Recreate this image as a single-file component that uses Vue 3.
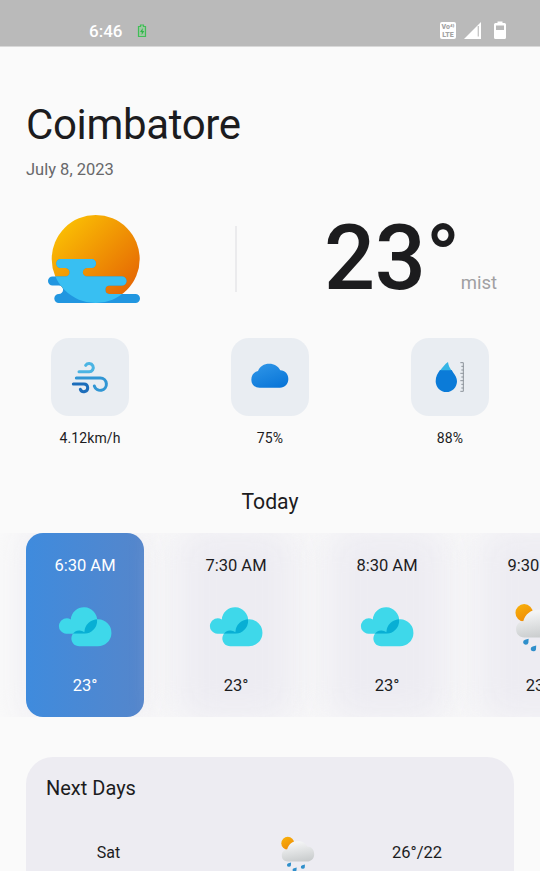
<script setup>
const stats = [
  { icon: 'wind', value: '4.12km/h' },
  { icon: 'cloud', value: '75%' },
  { icon: 'drop', value: '88%' },
]
const hours = [
  { time: '6:30 AM', icon: 'clouds', temp: '23°' },
  { time: '7:30 AM', icon: 'clouds', temp: '23°' },
  { time: '8:30 AM', icon: 'clouds', temp: '23°' },
  { time: '9:30 AM', icon: 'rain', temp: '23°' },
]
const days = [{ name: 'Sat', range: '26°/22' }]
</script>

<template>
  <div class="screen">
    <svg class="defs" width="0" height="0" aria-hidden="true">
      <defs>
        <linearGradient id="sunFill" x1="0.1" y1="0.1" x2="0.85" y2="0.85">
          <stop offset="0" stop-color="#fbc004" />
          <stop offset="1" stop-color="#e66a04" />
        </linearGradient>
        <linearGradient id="smallSun" x1="0.1" y1="0" x2="0.6" y2="1">
          <stop offset="0" stop-color="#f9b10a" />
          <stop offset="1" stop-color="#ee8c08" />
        </linearGradient>
        <linearGradient id="cloudFill" x1="0.15" y1="0" x2="0.7" y2="1">
          <stop offset="0" stop-color="#2f96e8" />
          <stop offset="1" stop-color="#0a76d8" />
        </linearGradient>
        <linearGradient id="greyFill" x1="0.35" y1="0" x2="0.6" y2="1">
          <stop offset="0.1" stop-color="#f3f4f5" />
          <stop offset="1" stop-color="#c9cccd" />
        </linearGradient>
        <symbol id="clouds" viewBox="25 29 162 124">
          <clipPath id="backCloud">
            <path d="M50 113A23.500 23.500 0 1 1 63 69.500A40 40 0 1 1 104 113Z" />
          </clipPath>
          <path fill="#3ed8ea" d="M50 113A23.500 23.500 0 1 1 63 69.500A40 40 0 1 1 104 113Z" />
          <path fill="#3ed8ea" d="M90 151A24 24 0 1 1 104 108.500A41 41 0 1 1 144 151Z" />
          <path clip-path="url(#backCloud)" fill="#08afd4" d="M90 151A24 24 0 1 1 104 108.500A41 41 0 1 1 144 151Z" />
        </symbol>
        <symbol id="rain" viewBox="60 270 102 112">
          <circle cx="80" cy="292" r="19.500" fill="url(#smallSun)" />
          <path fill="url(#greyFill)" d="M80 347C69 347 62 340 62 329C62 318 69 312 78 311C82 295 95 285 110 285C126 285 135 293 139 302C152 302 160 312 160 325C160 338 151 347 138 347Z" />
          <g fill="#2f8fcb">
            <path id="bead" d="M90 350L89.500 359A6 5.500 0 1 1 82 352.500Z" />
            <use href="#bead" x="17" y="15" />
            <use href="#bead" x="42" y="6" />
          </g>
        </symbol>
      </defs>
    </svg>

    <header class="status">
      <div class="status-left">
        <span class="clock">6:46</span>
        <svg class="charge" viewBox="0 0 10 14">
          <path d="M1.500 2.500H3.500V1H6.500V2.500H8.500V12.500H1.500Z" fill="#9fc7a4" stroke="#41bd57" stroke-width="1.200" />
          <path d="M5.800 4L3 8H4.700V11L7.300 7H5.500Z" fill="#2fb548" />
        </svg>
      </div>
      <div class="status-right">
        <div class="volte"><span>Vo⁴⁾</span><span>LTE</span></div>
        <svg class="signal" viewBox="0 0 17 17">
          <path d="M0 17L17 0V17Z" fill="#fff" />
          <path d="M14.300 4V14.500" stroke="#c4c4c4" stroke-width="1.300" />
        </svg>
        <svg class="battery" viewBox="0 0 12 18">
          <path d="M1.500 2H3.500V0.500H8.500V2H10.500Q12 2 12 3.500V16.500Q12 18 10.500 18H1.500Q0 18 0 16.500V3.500Q0 2 1.500 2Z" fill="#fff" />
          <path d="M2 4.500H10V9H2Z" fill="#b9b9b9" />
        </svg>
      </div>
    </header>

    <section class="place">
      <h1>Coimbatore</h1>
      <p>July 8, 2023</p>
    </section>

    <section class="now">
      <div class="now-icon">
        <svg viewBox="46 213 96 92">
          <defs>
            <clipPath id="disc"><circle cx="95.700" cy="259" r="44" /></clipPath>
            <path id="mist" d="M60.800 259H91.500A4.500 4.500 0 0 1 91.500 268H87A4.250 4.250 0 0 0 87 276.500H122A4.500 4.500 0 0 1 122 285.500H109A4.300 4.300 0 0 0 109 294H135.500A4.500 4.500 0 0 1 135.500 303H58.800A4.500 4.500 0 0 1 58.800 294A4.250 4.250 0 0 0 58.800 285.500H52.500A4.500 4.500 0 0 1 52.500 276.500H65.500A4.250 4.250 0 0 0 65.500 268H60.800A4.500 4.500 0 0 1 60.800 259Z" />
          </defs>
          <circle cx="95.700" cy="259" r="44" fill="url(#sunFill)" />
          <use href="#mist" fill="#2196e0" />
          <g clip-path="url(#disc)"><use href="#mist" fill="#38bff2" /></g>
        </svg>
      </div>
      <i class="divider"></i>
      <div class="now-temp">
        <strong>23°</strong>
        <span>mist</span>
      </div>
    </section>

    <section class="stats">
      <div v-for="s in stats" :key="s.icon" class="stat">
        <div class="tile">
          <svg viewBox="33 24 234 234">
            <g v-if="s.icon === 'wind'" fill="none" stroke-width="9" stroke-linecap="round">
              <path stroke="#4bb4e3" d="M117 125.500H147A12.500 12.500 0 1 0 137 106" />
              <path stroke="#3196d4" d="M109 144H181A18.500 18.500 0 1 1 163 168" />
              <path stroke="#1c6dba" d="M100 162H132A11.500 11.500 0 1 1 121 178" />
            </g>
            <path v-else-if="s.icon === 'cloud'" fill="url(#cloudFill)" d="M119 173C104 173 94 163 94 149C94 135 102 126 114 123C119 109 132 101 148 101C162 101 175 108 181 121C195 121 205 132 205 147C205 162 194 173 180 173Z" />
            <g v-else>
              <path fill="#0b7bd8" d="M120 120H155L160 128C166 136 171 144 171 154A32 32 0 0 1 107 154C107 139 113 130 120 120Z" />
              <path fill="#35b5e6" d="M121 121C128 112 134 103 144 96C145 106 149 113 154 121Z" />
              <path fill="none" stroke="#8d949c" stroke-width="3" d="M181 98H190V184H181M184 109H191M184 120H191M181 130H191M184 141H191M181 152H191M184 163H191M184 174H191" />
            </g>
          </svg>
        </div>
        <span>{{ s.value }}</span>
      </div>
    </section>

    <h2>Today</h2>

    <section class="hours">
      <article v-for="(h, i) in hours" :key="h.time" class="hour" :class="{ active: i === 0 }">
        <span>{{ h.time }}</span>
        <div class="hour-icon">
          <svg :class="h.icon"><use :href="'#' + h.icon" /></svg>
        </div>
        <span>{{ h.temp }}</span>
      </article>
    </section>

    <section class="next">
      <h3>Next Days</h3>
      <div v-for="d in days" :key="d.name" class="day">
        <span>{{ d.name }}</span>
        <svg><use href="#rain" /></svg>
        <span>{{ d.range }}</span>
      </div>
    </section>
  </div>
</template>

<style>
body {
  background: #fafafa;
  overflow: hidden;
}
</style>

<style scoped>
.screen {
  width: 540px;
  height: 871px;
  overflow: hidden;
  background: #fafafa;
  color: #1c1c1e;
  font-family: Roboto, sans-serif;
  display: flex;
  flex-direction: column;
}
.screen > * { flex-shrink: 0; }
svg { display: block; }
.defs { position: absolute; }
h1, h2, h3, p { margin: 0; font-weight: 400; }

.status {
  height: 47px;
  box-sizing: border-box;
  padding: 21px 34px 0 89px;
  display: flex;
  justify-content: space-between;
  background: #bababa;
  border-bottom: 1px solid #d9d9d9;
  color: #fff;
}
.status-left { display: flex; gap: 15px; height: 20px; align-items: center; }
.clock { font-size: 17px; line-height: 20px; font-weight: 500; }
.charge { width: 10px; height: 14px; }
.status-right { display: flex; height: 18px; align-items: flex-end; }
.volte {
  width: 16px;
  height: 17px;
  margin-right: 8px;
  border-radius: 2px;
  background: #fff;
  color: #a4a4a4;
  display: flex;
  flex-direction: column;
  align-items: center;
  justify-content: center;
  font-size: 7px;
  line-height: 8px;
  font-weight: 900;
}
.volte span { height: 8px; white-space: nowrap; }
.signal { width: 17px; height: 17px; margin-right: 13px; }
.battery { width: 12px; height: 18px; }

.place { padding: 53px 26px 0; height: 166px; box-sizing: border-box; }
h1 { font-size: 42px; line-height: 50px; letter-spacing: -0.35px; }
.place p { margin-top: 9px; font-size: 16.5px; line-height: 22px; color: #68686a; }

.now { display: flex; height: 125px; }
.now-icon { width: 235px; padding-left: 46px; box-sizing: border-box; }
.now-icon svg { width: 96px; height: 92px; }
.divider { width: 2px; height: 66px; margin-top: 13px; background: #ebebed; }
.now-temp { padding-left: 87px; display: flex; align-items: baseline; }
.now-temp strong { font-size: 90px; line-height: 91px; font-weight: 500; letter-spacing: -0.3px; }
.now-temp span { margin-left: 1px; font-size: 18.5px; color: #a0a0a2; }

.stats { display: grid; grid-template-columns: repeat(3, 180px); height: 149px; }
.stat { display: flex; flex-direction: column; align-items: center; gap: 12px; font-size: 14px; line-height: 20px; }
.stat > span { letter-spacing: 0.1px; }
.tile { width: 78px; height: 78px; border-radius: 18px; background: #e9edf2; }
.tile svg { width: 78px; height: 78px; }

h2 { font-size: 21.2px; line-height: 30px; height: 46px; text-align: center; }

.hours {
  height: 184px;
  padding-left: 26px;
  display: flex;
  gap: 33px;
  overflow: hidden;
}
.hour {
  position: relative;
  z-index: 0;
  width: 118px;
  flex: none;
  box-sizing: border-box;
  padding: 22px 0 20px;
  display: flex;
  flex-direction: column;
  align-items: center;
  justify-content: space-between;
  font-size: 16.5px;
  line-height: 22px;
}
.hour::before {
  content: '';
  position: absolute;
  z-index: -1;
  inset: -8px -4px;
  border-radius: 22px;
  background: #edecf2;
  filter: blur(18px);
}
.hour.active { z-index: auto; color: #fff; }
.hour.active::before { z-index: 0; }
.hour.active::after {
  content: '';
  position: absolute;
  z-index: 0;
  inset: 0;
  border-radius: 17px;
  background: linear-gradient(90deg, #3f8bdd, #5586cb);
}
.hour.active > * { position: relative; z-index: 1; }
.hour-icon { height: 56px; width: 54px; display: flex; justify-content: center; align-items: center; }
.clouds { width: 54px; height: 41px; }
.rain { width: 46px; height: 50px; margin-top: 3px; }

.next {
  margin: 40px 26px 0;
  height: 200px;
  border-radius: 27px;
  background: #edecf2;
}
h3 { padding: 18px 20px 0; font-size: 20px; line-height: 27px; }
.day {
  margin-top: 33px;
  display: grid;
  grid-template-columns: 165px 213px 26px;
  align-items: start;
  font-size: 16px;
  line-height: 36px;
}
.day span { text-align: center; white-space: nowrap; }
.day svg { width: 34px; height: 37px; margin-top: 1px; justify-self: center; }
.day span:last-child { width: 54px; justify-self: center; font-size: 16.5px; }
</style>
